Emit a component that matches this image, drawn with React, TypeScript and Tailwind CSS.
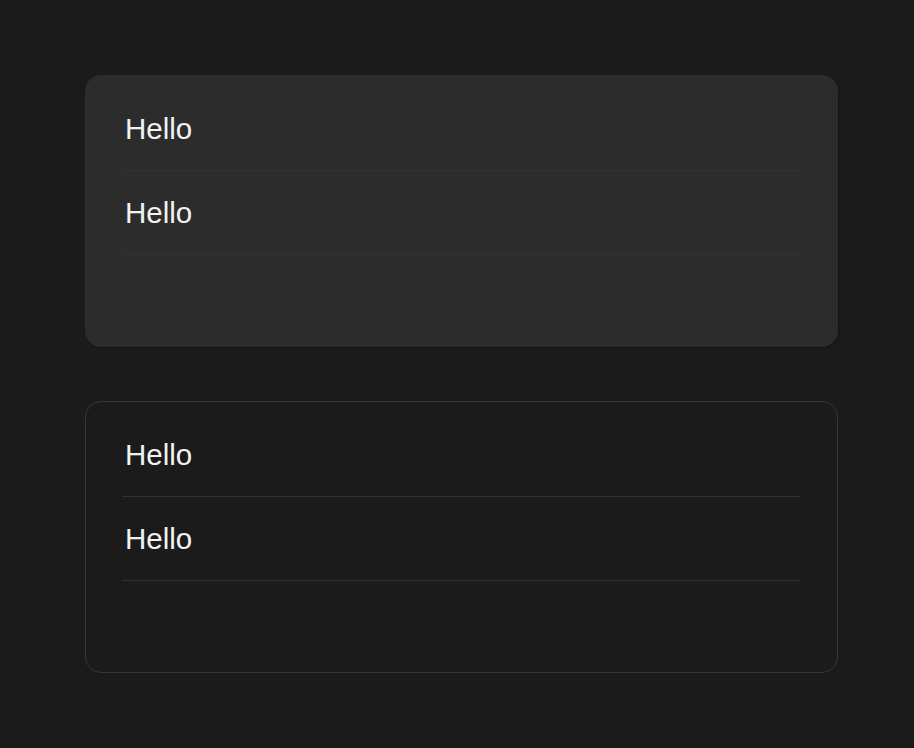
export default function App() {
  const rows = ["Hello", "Hello"];
  const Card = ({ filled }: { filled: boolean }) => (
    <div
      className={
        filled
          ? "w-[753px] h-[272px] rounded-[16px] bg-[#2c2c2c] px-[37px] pt-[12px] flex flex-col shadow-[1px_1px_1px_rgba(0,0,0,0.25)]"
          : "w-[753px] h-[272px] rounded-[16px] border border-[#363636] bg-[#1b1b1b] px-[36px] pt-[11px] flex flex-col"
      }
    >
      {rows.map((r, i) => (
        <div
          key={i}
          className={
            filled
              ? "h-[84px] flex items-center border-b border-[#323232] px-[3px]"
              : "h-[84px] flex items-center border-b border-[#313131] px-[3px]"
          }
        >
          <span className="text-[29.5px] leading-none text-[#f2f2f2] font-['Liberation_Sans',Arial,sans-serif]">
            {r}
          </span>
        </div>
      ))}
    </div>
  );
  return (
    <div className="w-[914px] h-[748px] bg-[#1b1b1b] pt-[75px] pl-[85px] flex flex-col gap-[54px]">
      <Card filled={true} />
      <Card filled={false} />
    </div>
  );
}
